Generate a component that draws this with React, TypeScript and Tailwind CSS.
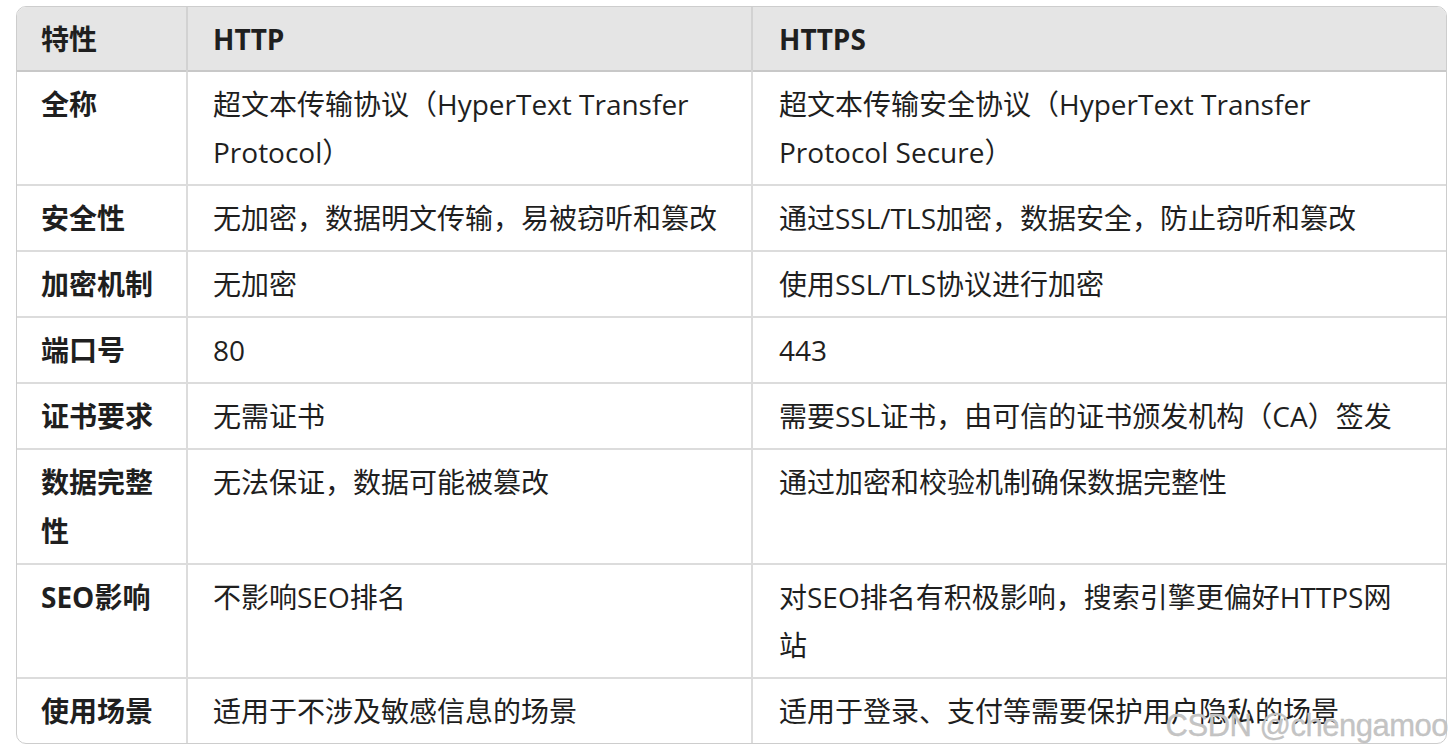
import React from "react";

const rows: [string, string, string][] = [
  ["全称", "超文本传输协议（HyperText Transfer Protocol）", "超文本传输安全协议（HyperText Transfer Protocol Secure）"],
  ["安全性", "无加密，数据明文传输，易被窃听和篡改", "通过SSL/TLS加密，数据安全，防止窃听和篡改"],
  ["加密机制", "无加密", "使用SSL/TLS协议进行加密"],
  ["端口号", "80", "443"],
  ["证书要求", "无需证书", "需要SSL证书，由可信的证书颁发机构（CA）签发"],
  ["数据完整性", "无法保证，数据可能被篡改", "通过加密和校验机制确保数据完整性"],
  ["SEO影响", "不影响SEO排名", "对SEO排名有积极影响，搜索引擎更偏好HTTPS网站"],
  ["使用场景", "适用于不涉及敏感信息的场景", "适用于登录、支付等需要保护用户隐私的场景"],
];

export default function App() {
  return (
    <div
      className="relative w-[1453px] h-[754px] bg-white text-[#1f1f1f]"
      style={{ fontFamily: '"Open Sans", "Noto Sans CJK SC", sans-serif' }}
    >
      <div className="absolute left-[16px] top-[6px] w-[1431px] border border-[#cdcdcd] rounded-[10px] overflow-hidden">
        <table className="w-full border-collapse table-fixed text-[28px] leading-[48.5px]">
          <colgroup>
            <col className="w-[170px]" />
            <col className="w-[565px]" />
            <col />
          </colgroup>
          <thead>
            <tr className="bg-[#e5e5e5] border-b-2 border-[#c8c8c8]">
              <th className="text-left font-bold px-[24px] pt-[8px] pb-[6px] border-r-2 border-[#d2d2d2]">特性</th>
              <th className="text-left font-bold px-[25px] pt-[8px] pb-[6px] border-r-2 border-[#d2d2d2]">HTTP</th>
              <th className="text-left font-bold pl-[26px] pr-[32px] pt-[8px] pb-[6px]">HTTPS</th>
            </tr>
          </thead>
          <tbody>
            {rows.map((r, i) => (
              <tr key={i} className={i < rows.length - 1 ? "border-b-2 border-[#dcdcdc]" : ""}>
                <td className="align-top font-bold px-[24px] pt-[8px] pb-[7.5px] border-r-2 border-[#dcdcdc]">{r[0]}</td>
                <td className="align-top px-[25px] pt-[8px] pb-[7.5px] border-r-2 border-[#dcdcdc]">{r[1]}</td>
                <td className="align-top pl-[26px] pr-[32px] pt-[8px] pb-[7.5px]">{r[2]}</td>
              </tr>
            ))}
          </tbody>
        </table>
      </div>
      <div
        className="absolute right-[5px] top-[708px] text-[31px] leading-[36px] text-[#c4c4c4] tracking-[-0.5px]"
        style={{ fontFamily: '"Liberation Sans", sans-serif', WebkitTextStroke: "0.3px #bdbdbd" }}
      >
        CSDN @chengamoo
      </div>
    </div>
  );
}
